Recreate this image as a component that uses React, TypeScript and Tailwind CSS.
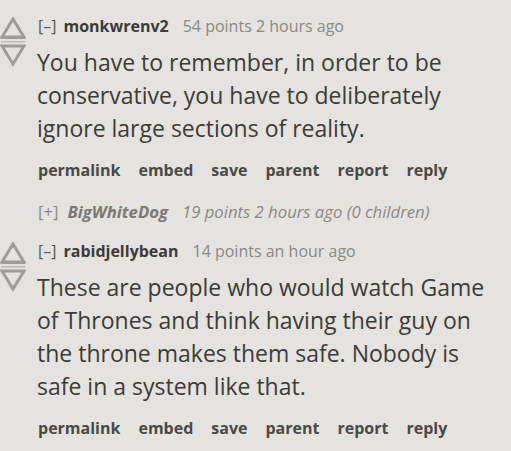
const font = { fontFamily: '"Open Sans", "Noto Sans", sans-serif' };

const actions = ['permalink', 'embed', 'save', 'parent', 'report', 'reply'];

const Arrows = () => (
  <svg width="26" height="50" viewBox="0 0 26 50" className="shrink-0">
    <g fill="none" stroke="#9d9c98" strokeWidth="3" strokeLinejoin="miter">
      <path d="M13 2 L24 20 L2 20 Z" />
      <path d="M2 29 L24 29 L13 47 Z" />
    </g>
    <rect x="1" y="19" width="24" height="3" fill="#9d9c98" />
    <rect x="1" y="24" width="24" height="1.5" fill="#bdbcb7" />
    <rect x="1" y="28" width="24" height="2" fill="#9d9c98" />
  </svg>
);

interface CommentProps {
  author: string;
  points: string;
  time: string;
  lines: string[];
}

const Comment = ({ author, points, time, lines }: CommentProps) => (
  <div className="flex">
    <div className="w-[38px] pt-[17px]">
      <Arrows />
    </div>
    <div className="flex-1">
      <div className="flex items-center h-[20px] text-[16px] leading-[20px] mt-[16px]">
        <span className="text-[#5c5a55] mr-[7px]">[–]</span>
        <span className="font-bold text-[#3c3b37] mr-[14px]">{author}</span>
        <span className="text-[#8a8985]">
          {points} {time}
        </span>
      </div>
      <div className="mt-[10px] text-[23px] leading-[33px] text-[#3c3b37] -ml-[1px]">
        {lines.map((l) => (
          <div key={l}>{l}</div>
        ))}
      </div>
      <div className="flex gap-[18px] mt-[15px] text-[16px] leading-[20px] font-bold text-[#4a4946]">
        {actions.map((a) => (
          <span key={a}>{a}</span>
        ))}
      </div>
    </div>
  </div>
);

export default function App() {
  return (
    <div className="w-[511px] h-[451px] bg-[#e4e3df] overflow-hidden" style={font}>
      <Comment
        author="monkwrenv2"
        points="54 points"
        time="2 hours ago"
        lines={[
          'You have to remember, in order to be',
          'conservative, you have to deliberately',
          'ignore large sections of reality.',
        ]}
      />
      <div className="flex items-center h-[20px] mt-[22px] ml-[38px] text-[16.7px] leading-[20px] italic text-[#8a8985]">
        <span className="not-italic text-[#8a8985] mr-[9px]">[+]</span>
        <span className="font-bold mr-[14px] text-[#7a7975]">BigWhiteDog</span>
        <span>19 points 2 hours ago (0 children)</span>
      </div>
      <div className="mt-[3px]">
        <Comment
          author="rabidjellybean"
          points="14 points"
          time="an hour ago"
          lines={[
            'These are people who would watch Game',
            'of Thrones and think having their guy on',
            'the throne makes them safe. Nobody is',
            'safe in a system like that.',
          ]}
        />
      </div>
    </div>
  );
}
